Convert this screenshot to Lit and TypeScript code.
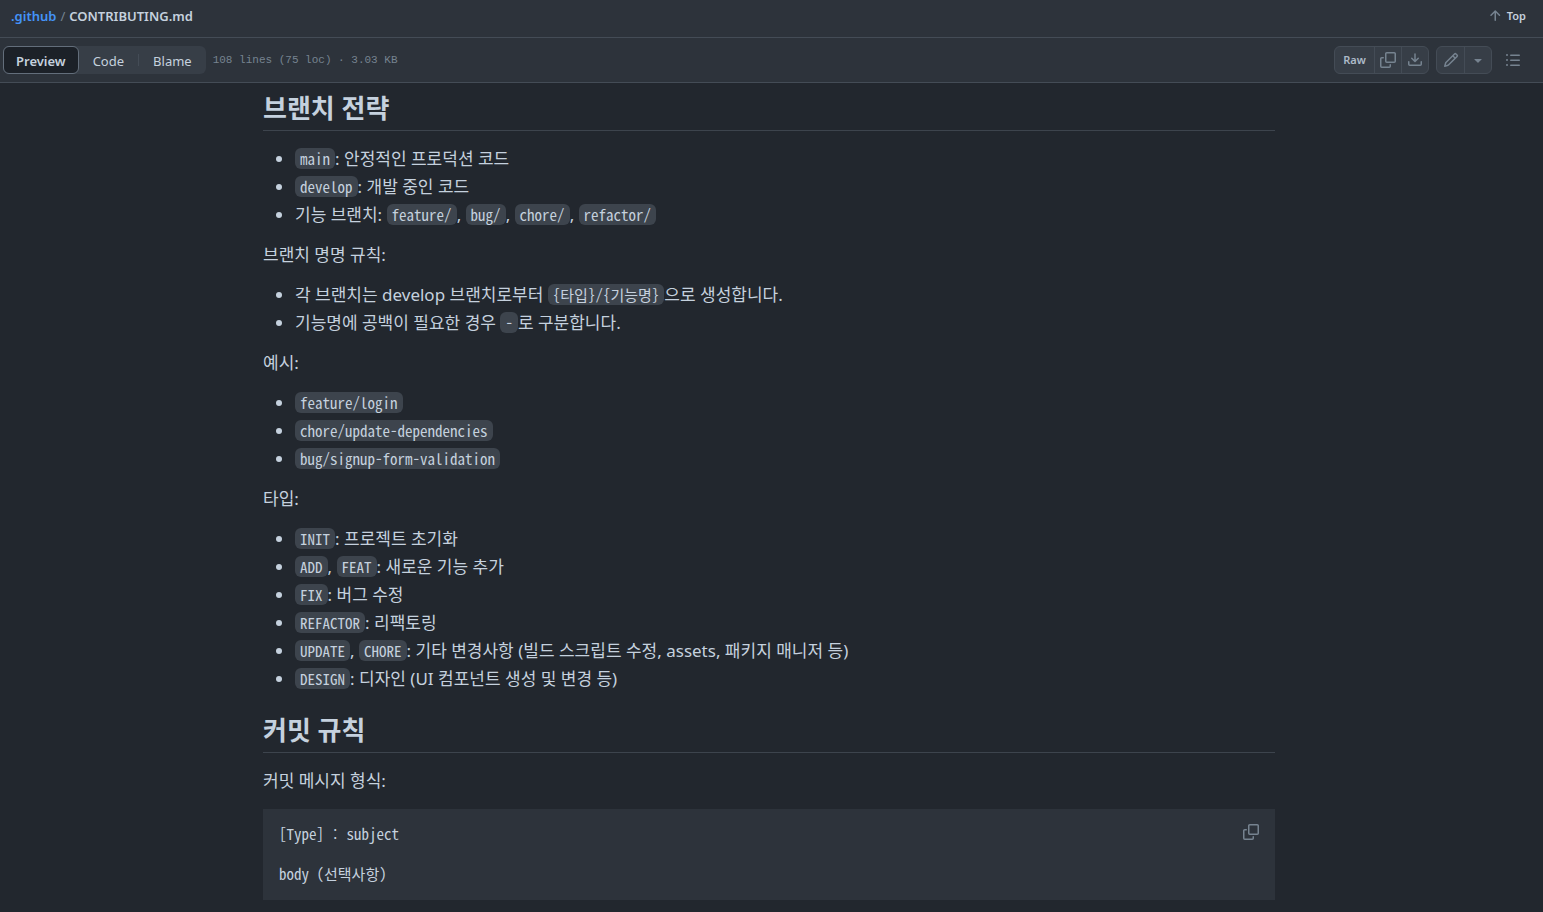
import { LitElement, html, css, svg } from "lit";
import { customElement, state } from "lit/decorators.js";

const icons = {
  arrowUp: "M3.47 7.78a.75.75 0 0 1 0-1.06l4.25-4.25a.75.75 0 0 1 1.06 0l4.25 4.25a.751.751 0 0 1-.018 1.042.751.751 0 0 1-1.042.018L9 4.81v7.44a.75.75 0 0 1-1.5 0V4.81L4.53 7.78a.75.75 0 0 1-1.06 0Z",
  copy: "M0 6.75C0 5.784.784 5 1.75 5h1.5a.75.75 0 0 1 0 1.5h-1.5a.25.25 0 0 0-.25.25v7.5c0 .138.112.25.25.25h7.5a.25.25 0 0 0 .25-.25v-1.5a.75.75 0 0 1 1.5 0v1.5A1.75 1.75 0 0 1 9.25 16h-7.5A1.75 1.75 0 0 1 0 14.25ZM5 1.75C5 .784 5.784 0 6.75 0h7.5C15.216 0 16 .784 16 1.75v7.5A1.75 1.75 0 0 1 14.25 11h-7.5A1.75 1.75 0 0 1 5 9.25Zm1.75-.25a.25.25 0 0 0-.25.25v7.5c0 .138.112.25.25.25h7.5a.25.25 0 0 0 .25-.25v-7.5a.25.25 0 0 0-.25-.25Z",
  download: "M2.75 14A1.75 1.75 0 0 1 1 12.25v-2.5a.75.75 0 0 1 1.5 0v2.5c0 .138.112.25.25.25h10.5a.25.25 0 0 0 .25-.25v-2.5a.75.75 0 0 1 1.5 0v2.5A1.75 1.75 0 0 1 13.25 14ZM7.25 7.689V2a.75.75 0 0 1 1.5 0v5.689l1.97-1.969a.749.749 0 1 1 1.06 1.06l-3.25 3.25a.749.749 0 0 1-1.06 0L4.22 6.78a.749.749 0 1 1 1.06-1.06l1.97 1.969Z",
  pencil: "M11.013 1.427a1.75 1.75 0 0 1 2.474 0l1.086 1.086a1.75 1.75 0 0 1 0 2.474l-8.61 8.61c-.21.21-.47.364-.756.445l-3.251.93a.75.75 0 0 1-.927-.928l.929-3.25c.081-.286.235-.547.445-.758l8.61-8.61Zm.176 4.823L9.75 4.81l-6.286 6.287a.253.253 0 0 0-.064.108l-.558 1.953 1.953-.558a.253.253 0 0 0 .108-.064Zm1.238-3.763a.25.25 0 0 0-.354 0L10.811 3.75l1.439 1.44 1.263-1.263a.25.25 0 0 0 0-.354Z",
  triangleDown: "m4.427 7.427 3.396 3.396a.25.25 0 0 0 .354 0l3.396-3.396A.25.25 0 0 0 11.396 7H4.604a.25.25 0 0 0-.177.427Z",
  list: "M5.75 2.5h8.5a.75.75 0 0 1 0 1.5h-8.5a.75.75 0 0 1 0-1.5Zm0 5h8.5a.75.75 0 0 1 0 1.5h-8.5a.75.75 0 0 1 0-1.5Zm0 5h8.5a.75.75 0 0 1 0 1.5h-8.5a.75.75 0 0 1 0-1.5ZM2 14a1 1 0 1 1 0-2 1 1 0 0 1 0 2Zm1-6a1 1 0 1 1-2 0 1 1 0 0 1 2 0ZM2 4a1 1 0 1 1 0-2 1 1 0 0 1 0 2Z",
};

const icon = (name: keyof typeof icons) => html`<svg class="icon" viewBox="0 0 16 16" width="16" height="16" aria-hidden="true">${svg`<path d=${icons[name]}></path>`}</svg>`;

@customElement("app-root")
export class AppRoot extends LitElement {
  @state() private view = "Preview";

  static styles = css`
    :host {
      display: block;
      min-height: 100vh;
      background: #22272e;
      color: #c5d1de;
      font-family: "Noto Sans", "Noto Sans CJK KR", sans-serif;
      font-size: 17px;
      line-height: 24px;
    }
    * { box-sizing: border-box; }
    button {
      margin: 0;
      padding: 0;
      border: 0;
      background: none;
      color: inherit;
      font: inherit;
      cursor: pointer;
    }
    .icon { display: block; fill: #768390; }
    .bar {
      display: flex;
      align-items: center;
      justify-content: space-between;
      background: #2d333b;
      border-bottom: 1px solid #444c56;
    }
    .path-bar { height: 38px; padding: 0 17px 6px 11px; }
    .tool-bar { height: 45px; padding: 0 22px 0 3px; }
    .crumbs { display: flex; gap: 4px; font-size: 13px; }
    .crumbs a { color: #4493f8; font-weight: 600; text-decoration: none; }
    .crumbs .slash { color: #768390; }
    .crumbs .file { font-weight: 600; }
    .top { display: flex; align-items: center; gap: 4px; font-size: 11px; font-weight: 600; }
    .left, .right { display: flex; align-items: center; gap: 7px; }
    .segments {
      display: flex;
      height: 28px;
      border-radius: 6px;
      background: #373e47;
      font-size: 13px;
    }
    .segment {
      display: flex;
      align-items: center;
      padding: 1px 13px 0;
      border: 1px solid transparent;
      border-radius: 6px;
    }
    .segment.selected { padding: 1px 12px 0; background: #1c2128; border-color: #636e7b; font-weight: 600; }
    .divider { align-self: center; width: 1px; height: 12px; background: #444c56; }
    code, pre { font-family: "Noto Sans Mono CJK KR", "Liberation Mono", monospace; }
    .info { color: #768390; font-family: "Liberation Mono", monospace; font-size: 11px; }
    .group {
      display: flex;
      height: 28px;
      border: 1px solid #444c56;
      border-radius: 6px;
      background: #373e47;
    }
    .group button {
      display: flex;
      align-items: center;
      justify-content: center;
      width: 27px;
      font-size: 11px;
      font-weight: 600;
    }
    .group button + button { border-left: 1px solid #444c56; }
    .group .raw { width: 39px; color: #adbac7; }
    .outline { padding: 6px 0 6px 6px; }
    .page { padding: 10px 5px 11px 0; }
    .markdown { max-width: 1012px; margin: 0 auto; }
    h2 {
      margin: 24px 0 16px;
      padding-bottom: 7px;
      border-bottom: 1px solid #3d444d;
      font-size: 26px;
      line-height: 30px;
      font-weight: 600;
    }
    h2:first-child { margin-top: 0; }
    p { margin: 0 0 16px; }
    ul { margin: 0 0 16px; padding-left: 32px; }
    li + li { margin-top: 4px; }
    li code {
      padding: 0 5px;
      border-radius: 6px;
      background: #3d444d;
      font-size: 15px;
      line-height: 16px;
    }
    .snippet {
      display: flex;
      align-items: flex-start;
      justify-content: space-between;
      padding: 15px 16px 16px;
      background: #2d333b;
    }
    pre { margin: 0; font-size: 15px; line-height: 20px; }
    pre code { font: inherit; }
  `;

  private segment(name: string) {
    return html`<button class="segment ${this.view === name ? "selected" : ""}" aria-pressed=${this.view === name} @click=${() => (this.view = name)}>${name}</button>`;
  }

  render() {
    return html`
      <header>
        <div class="bar path-bar">
          <nav class="crumbs" aria-label="Breadcrumb">
            <a href="#github">.github</a><span class="slash">/</span><span class="file">CONTRIBUTING.md</span>
          </nav>
          <button class="top">${icon("arrowUp")}Top</button>
        </div>
        <div class="bar tool-bar">
          <div class="left">
            <div class="segments">
              ${this.segment("Preview")}${this.segment("Code")}<span class="divider"></span>${this.segment("Blame")}
            </div>
            <span class="info">108 lines (75 loc) · 3.03 KB</span>
          </div>
          <div class="right">
            <div class="group">
              <button class="raw">Raw</button>
              <button aria-label="Copy raw file">${icon("copy")}</button>
              <button aria-label="Download raw file">${icon("download")}</button>
            </div>
            <div class="group">
              <button aria-label="Edit file">${icon("pencil")}</button>
              <button aria-label="More edit options">${icon("triangleDown")}</button>
            </div>
            <button class="outline" aria-label="Outline">${icon("list")}</button>
          </div>
        </div>
      </header>
      <main class="page">
        <article class="markdown" lang="ko">
          <h2>브랜치 전략</h2>
          <ul>
            <li><code>main</code>: 안정적인 프로덕션 코드</li>
            <li><code>develop</code>: 개발 중인 코드</li>
            <li>기능 브랜치: <code>feature/</code>, <code>bug/</code>, <code>chore/</code>, <code>refactor/</code></li>
          </ul>
          <p>브랜치 명명 규칙:</p>
          <ul>
            <li>각 브랜치는 develop 브랜치로부터 <code>{타입}/{기능명}</code>으로 생성합니다.</li>
            <li>기능명에 공백이 필요한 경우 <code>-</code>로 구분합니다.</li>
          </ul>
          <p>예시:</p>
          <ul>
            <li><code>feature/login</code></li>
            <li><code>chore/update-dependencies</code></li>
            <li><code>bug/signup-form-validation</code></li>
          </ul>
          <p>타입:</p>
          <ul>
            <li><code>INIT</code>: 프로젝트 초기화</li>
            <li><code>ADD</code>, <code>FEAT</code>: 새로운 기능 추가</li>
            <li><code>FIX</code>: 버그 수정</li>
            <li><code>REFACTOR</code>: 리팩토링</li>
            <li><code>UPDATE</code>, <code>CHORE</code>: 기타 변경사항 (빌드 스크립트 수정, assets, 패키지 매니저 등)</li>
            <li><code>DESIGN</code>: 디자인 (UI 컴포넌트 생성 및 변경 등)</li>
          </ul>
          <h2>커밋 규칙</h2>
          <p>커밋 메시지 형식:</p>
          <div class="snippet">
            <pre><code>[Type] : subject

body (선택사항)</code></pre>
            <button aria-label="Copy">${icon("copy")}</button>
          </div>
        </article>
      </main>
    `;
  }
}
